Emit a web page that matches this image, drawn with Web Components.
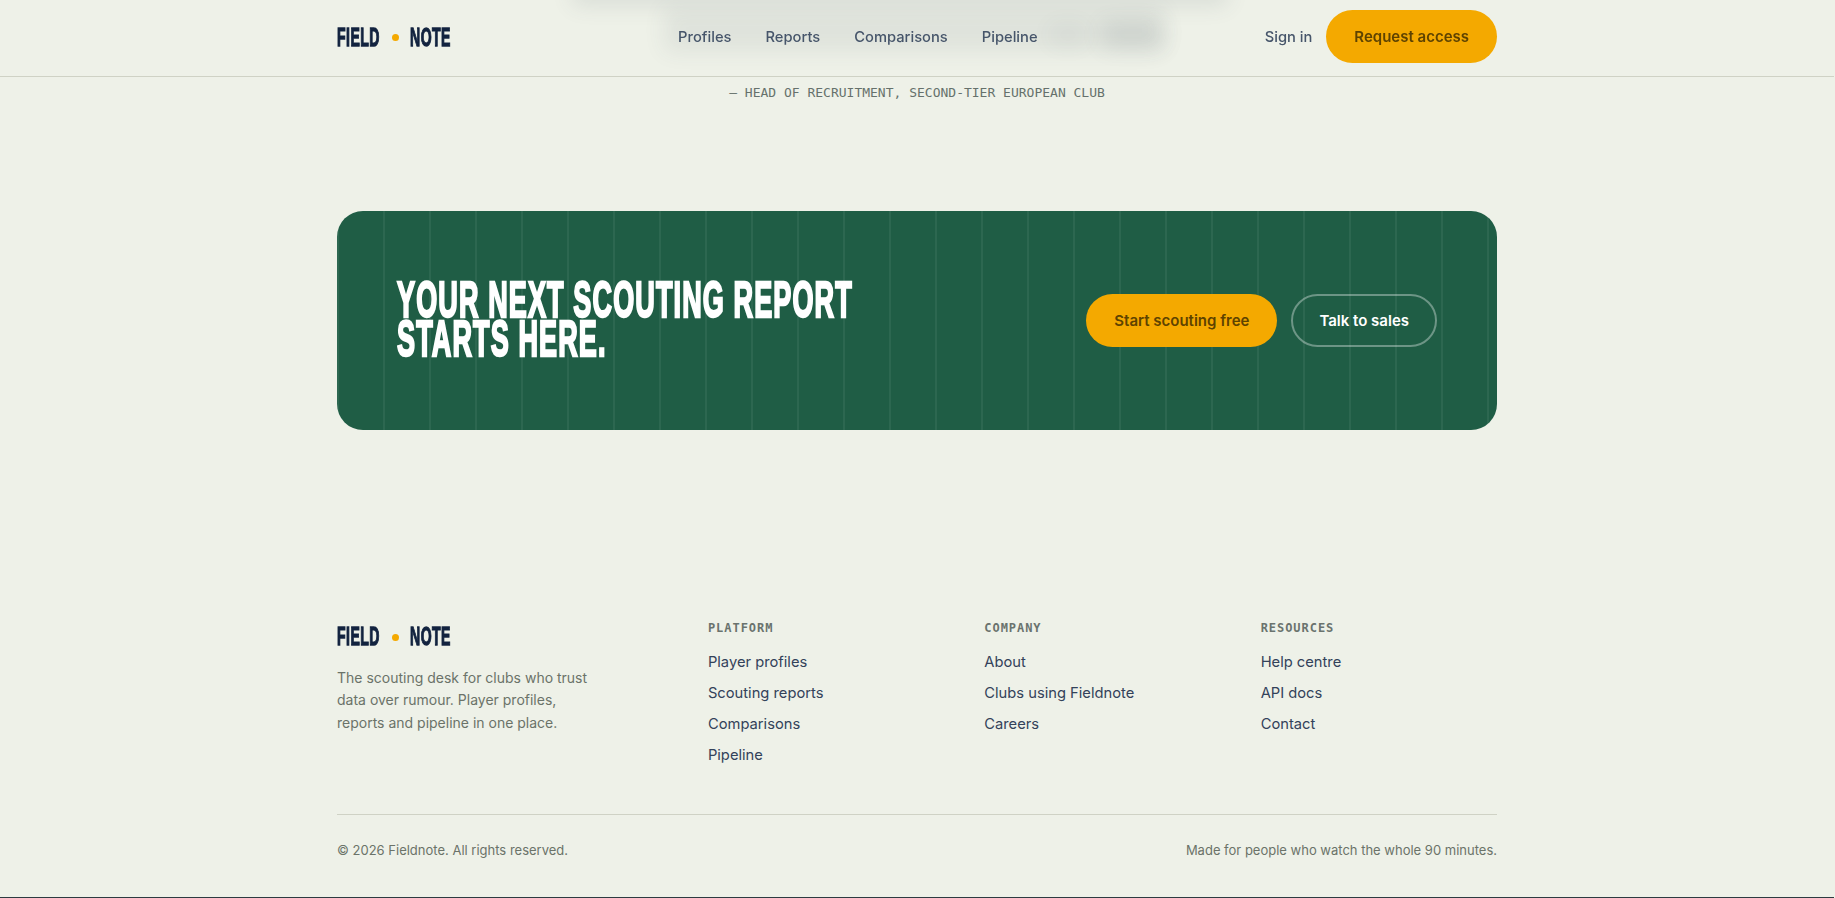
<!doctype html>
<html lang="en"><head><meta charset="utf-8"><title>Fieldnote</title>
<style>
html{margin:0;padding:0;background:#eef1e8}
body{margin:0 1px 0 0;padding:0;font-family:Inter,"Liberation Sans",sans-serif;}
</style></head><body>
<fn-header></fn-header>
<fn-quote>— HEAD OF RECRUITMENT, SECOND-TIER EUROPEAN CLUB</fn-quote>
<fn-cta></fn-cta>
<fn-footer></fn-footer>
<script>
const define=(name,html)=>customElements.define(name,class extends HTMLElement{
  constructor(){super();this.attachShadow({mode:'open'}).innerHTML=html;}
});
define('fn-logo',`<style>
:host{display:flex;align-items:center;width:113px;height:20px}
.w{display:block;font:700 26px/20px "Liberation Sans",sans-serif;letter-spacing:.9px;color:#12233f;transform:scaleX(.54);transform-origin:0 50%;-webkit-text-stroke:1.3px #12233f;white-space:nowrap}
.a{width:43.5px}.b{width:41px}
i{width:7px;height:7px;border-radius:50%;background:#f4a900;margin:2px 11.5px 0 11px;flex:none}
</style><span class="w a">FIELD</span><i></i><span class="w b">NOTE</span>`);
define('fn-button',`<style>
:host{display:inline-flex;align-items:center;justify-content:center;box-sizing:border-box;height:53px;padding:0 28px;border-radius:27px;background:#f4a900;color:#5e4300;font:600 15px/1 Inter,sans-serif;white-space:nowrap}
:host([ghost]){background:transparent;color:#fff;border:2px solid rgba(255,255,255,.35);padding:0 26px}
</style><slot></slot>`);
define('fn-header',`<style>
:host{display:block;position:sticky;top:0;z-index:10;box-sizing:border-box;height:77px;border-bottom:1px solid #cfd2c5}
.in{box-sizing:border-box;width:1160px;height:73px;margin:0 auto;display:flex;align-items:center;justify-content:space-between}
nav{display:flex;gap:34px;padding-top:2px;margin-left:1px;font:500 14.72px/1 Inter,sans-serif;color:#46556a}
.r{display:flex;align-items:center;gap:14px;font:500 14.72px/1 Inter,sans-serif;color:#46556a}
.r span{padding-top:1px}
</style><div class="in"><fn-logo></fn-logo>
<nav><span>Profiles</span><span>Reports</span><span>Comparisons</span><span>Pipeline</span></nav>
<div class="r"><span>Sign in</span><fn-button>Request access</fn-button></div></div>`);
define('fn-quote',`<style>
:host{display:block;position:relative;height:134px;text-align:center;font:13px/18px "DejaVu Sans Mono","Liberation Mono",monospace;color:#66716c;padding-top:7px;box-sizing:border-box}
.bars{position:absolute;left:0;right:-1px;top:-77px;height:77px;overflow:hidden;z-index:-1}
.bars b{position:absolute;background:#2c3d4a;display:block;filter:blur(11px)}
</style><div class="bars" aria-hidden="true">
<b style="left:572px;top:-24px;width:656px;height:30px;opacity:.1"></b>
<b style="left:664px;top:8px;width:500px;height:44px;opacity:.075"></b>
<b style="left:1050px;top:24px;width:36px;height:22px;opacity:.05"></b>
<b style="left:1102px;top:22px;width:62px;height:26px;opacity:.1"></b>
</div><slot></slot>`);
define('fn-cta',`<style>
:host{display:flex;box-sizing:border-box;width:1160px;height:219px;margin:0 auto;border-radius:26px;background-color:#1f5d45;background-image:linear-gradient(90deg,transparent 44px,rgba(255,255,255,.06) 44px);background-size:46px 100%;background-position:2px 0;padding:0 60px;align-items:center;justify-content:space-between}
h2{margin:0;width:460px;flex:none;padding-bottom:2px}
h2 span{display:block;width:870px;font:700 50px/39px "Liberation Sans",sans-serif;letter-spacing:2.1px;color:#fff;transform:scaleX(.54);transform-origin:0 50%;-webkit-text-stroke:2.5px #fff}
.b{display:flex;gap:14px}
</style><h2><span>YOUR NEXT SCOUTING REPORT STARTS HERE.</span></h2>
<div class="b"><fn-button>Start scouting free</fn-button><fn-button ghost>Talk to sales</fn-button></div>`);
define('fn-footer',`<style>
:host{display:block;margin-top:190px}
.in{width:1160px;margin:0 auto}
.g{display:grid;grid-template-columns:1.4fr 1fr 1fr 1fr;gap:40px;padding-bottom:43px}
p{margin:21px 0 0;width:260px;font:400 14px/22.4px Inter,sans-serif;color:#6b7369}
a{display:block;font:400 14.72px/31px Inter,sans-serif;color:#33425a}
h4{margin:0 0 11px;font:700 12px/16px "DejaVu Sans Mono","Liberation Mono",monospace;letter-spacing:.96px;color:#6a736e}
.l{padding-top:6px}
.bt{border-top:1px solid #cfd2c5;display:flex;justify-content:space-between;padding-top:26px;height:56px;font:400 13px/18px Inter,sans-serif;color:#6b7369}
.end{height:1px;background:#2d3b40;margin-right:-1px}
</style><div class="in"><div class="g">
<div class="l"><fn-logo></fn-logo><p>The scouting desk for clubs who trust data over rumour. Player profiles, reports and pipeline in one place.</p></div>
<div><h4>PLATFORM</h4><a>Player profiles</a><a>Scouting reports</a><a>Comparisons</a><a>Pipeline</a></div>
<div><h4>COMPANY</h4><a>About</a><a>Clubs using Fieldnote</a><a>Careers</a></div>
<div><h4>RESOURCES</h4><a>Help centre</a><a>API docs</a><a>Contact</a></div>
</div><div class="bt"><span>© 2026 Fieldnote. All rights reserved.</span><span>Made for people who watch the whole 90 minutes.</span></div></div><div class="end"></div>`);
</script>
</body></html>
